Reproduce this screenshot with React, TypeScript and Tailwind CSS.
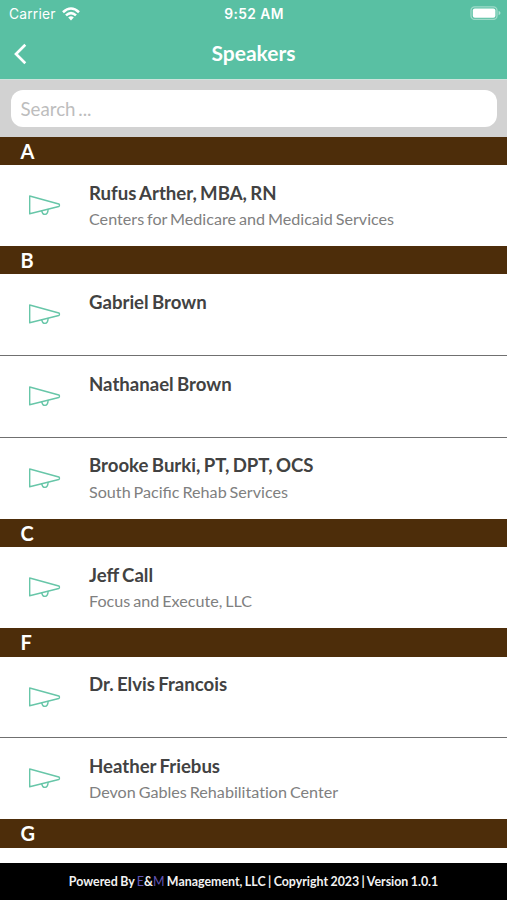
type Speaker = { name: string; org?: string; plainLetters?: boolean };
type Section = { letter: string; speakers: Speaker[] };

const sections: Section[] = [
  { letter: 'A', speakers: [{ name: 'Rufus Arther, MBA, RN', org: 'Centers for Medicare and Medicaid Services' }] },
  {
    letter: 'B',
    speakers: [
      { name: 'Gabriel Brown' },
      { name: 'Nathanael Brown' },
      { name: 'Brooke Burki, PT, DPT, OCS', org: 'South Pacific Rehab Services' },
    ],
  },
  { letter: 'C', speakers: [{ name: 'Jeff Call', org: 'Focus and Execute, LLC' }] },
  {
    letter: 'F',
    speakers: [
      { name: 'Dr. Elvis Francois' },
      { name: 'Heather Friebus', org: 'Devon Gables Rehabilitation Center', plainLetters: true },
    ],
  },
  { letter: 'G', speakers: [] },
];

function Megaphone() {
  return (
    <svg className="mt-[29px] h-6 w-[34px] shrink-0" viewBox="0 0 34 24" fill="none" stroke="#67c6a8" strokeWidth="1.4" strokeLinejoin="round" strokeLinecap="round">
      <path d="M2.7 2 L31.8 10 Q32.4 10.2 32.4 10.7 V11.8 Q32.4 12.3 31.8 12.5 L2.7 19.8 Z" />
      <path d="M14.7 16.8 Q15.5 20.6 18.1 20.4 Q20.9 20.1 21.1 15.4" />
    </svg>
  );
}

function StatusBar() {
  return (
    <div className="grid h-7 grid-cols-3 items-center pr-[6px] pl-[9px] font-['Inter','Liberation_Sans',sans-serif] text-[13.5px] leading-7">
      <div className="flex items-center gap-[6px]">
        <span className="text-[13.8px] tracking-[0.2px]">Carrier</span>
        <svg className="-mt-px h-[14px] w-[18px]" viewBox="0 0 18 14" fill="none" stroke="white" strokeWidth="2.6">
          <path d="M1 5.2 Q9 -2.2 17 5.2" />
          <path d="M4 8.4 Q9 3.8 14 8.4" />
          <path d="M9 13.4 L6.2 10.5 Q9 8.2 11.8 10.5 Z" fill="white" stroke="none" />
        </svg>
      </div>
      <span className="-ml-[2px] text-center text-[13.8px] font-semibold tracking-[0.4px] whitespace-nowrap">9:52 AM</span>
      <svg className="-mt-[2px] h-[14px] w-[31px] justify-self-end" viewBox="0 0 31 14">
        <rect x="1" y="0.8" width="26" height="12.6" rx="3.6" fill="none" stroke="white" strokeOpacity="0.42" strokeWidth="1.3" />
        <rect x="2.8" y="2.5" width="22.6" height="9.2" rx="2" fill="white" />
        <path d="M28.6 4.8 Q30.5 5.6 30.5 7 T28.6 9.2 Z" fill="white" fillOpacity="0.5" />
      </svg>
    </div>
  );
}

export default function App() {
  return (
    <div className="flex h-[900px] w-[507px] flex-col overflow-hidden bg-white font-['Lato',sans-serif]">
      <header className="h-20 shrink-0 border-b border-[#cfe3dc] bg-[#59c0a3] text-white">
        <StatusBar />
        <div className="grid h-[51px] grid-cols-[40px_1fr_40px] items-center">
          <svg className="ml-[13px] h-[22px] w-[14px]" viewBox="0 0 14 22" fill="none" stroke="white" strokeWidth="2.7">
            <path d="M12.3 1.8 L3 11 L12.3 20.2" />
          </svg>
          <h1 className="-mt-px text-center text-[21px] font-bold">Speakers</h1>
        </div>
      </header>
      <div className="h-[56.6px] shrink-0 bg-[#d2d2d2] px-[10.5px] pt-[10px]">
        <input
          className="h-[37px] w-full rounded-[12px] bg-white px-[10px] text-[18.7px] [word-spacing:-2px] text-[#666] outline-none placeholder:text-[#bdbdbd]"
          placeholder="Search ..."
        />
      </div>
      <main className="min-h-0 flex-1 overflow-hidden">
        {sections.map((section) => (
          <section key={section.letter}>
            <h2 className="h-[28.5px] bg-[#4d2d0a] pl-[20.5px] text-[20px] leading-[29px] font-bold text-white">{section.letter}</h2>
            <ul>
              {section.speakers.map((s) => (
                <li key={s.name} className="flex h-[81.8px] border-b border-[#707070] pl-[27px] last:h-[80.8px] last:border-b-0">
                  <Megaphone />
                  <div className="pt-[15.5px] pl-[28px] whitespace-nowrap">
                    <h3 className="text-[18.6px] leading-6 font-bold [word-spacing:-1.2px] text-[#424242]">{s.name}</h3>
                    {s.org && (
                      <p className={`pt-[2.4px] text-[16.15px] leading-6 [word-spacing:-1.2px] text-[#808080] ${s.plainLetters ? '[font-variant-ligatures:none]' : ''}`}>
                        {s.org}
                      </p>
                    )}
                  </div>
                </li>
              ))}
            </ul>
          </section>
        ))}
      </main>
      <footer className="h-[37px] shrink-0 bg-black text-center text-[12.4px] leading-[37px] font-bold [word-spacing:-0.6px] text-[#f2f2f2]">
        Powered By <span className="font-normal text-[#6255b5]">E</span>&amp;<span className="font-normal text-[#6255b5]">M</span> Management, LLC | Copyright 2023 | Version 1.0.1
      </footer>
    </div>
  );
}
